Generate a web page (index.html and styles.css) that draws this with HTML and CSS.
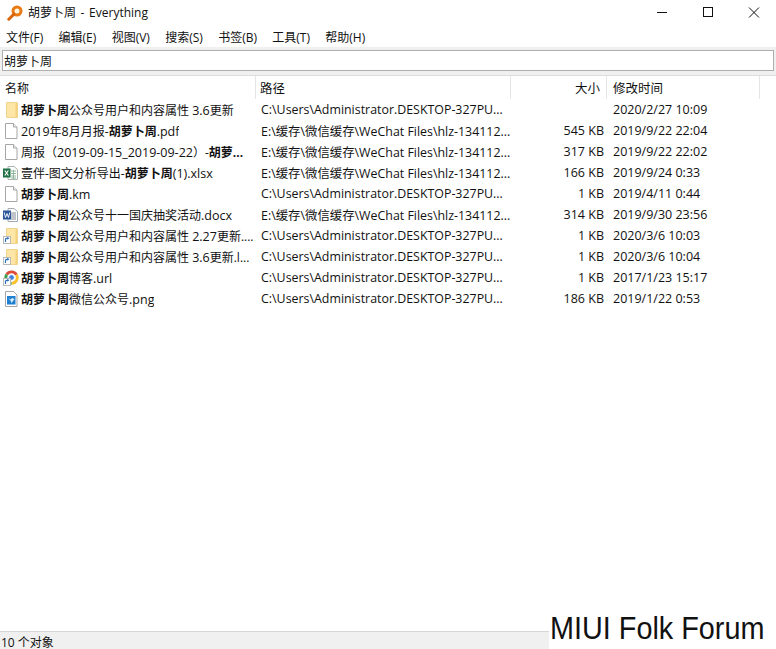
FILE: index.html
```html
<!DOCTYPE html>
<html lang="zh">
<head>
<meta charset="utf-8">
<title>胡萝卜周 - Everything</title>
<link rel="stylesheet" href="styles.css">
</head>
<body>
<svg class="defs" width="0" height="0" aria-hidden="true">
  <defs>
    <symbol id="i-folder" viewBox="0 0 16 16">
      <path d="M3.500 .5h10.500a.5.5 0 0 1 .5.5v14.500h-10.500a.5.5 0 0 1-.5-.5z" fill="#fde6a6" stroke="#eacb7c" stroke-width=".8"/>
      <path d="M12.500 1.500h1.500v13.500h-1.500z" fill="#f6d27a"/>
    </symbol>
    <symbol id="i-file" viewBox="0 0 16 16">
      <path d="M2.500 .5h8l3.500 3.500v11.500h-11.500z" fill="#fff" stroke="#a6a6a6"/>
      <path d="M10.500 .5v3.500h3.500" fill="#f1f1f1" stroke="#a6a6a6"/>
    </symbol>
    <symbol id="i-xlsx" viewBox="0 0 16 16">
      <path d="M5 1.500h6l3.500 3v10h-9.500z" fill="#fff" stroke="#a9b5ac"/>
      <path d="M8 6h5M8 8.500h5M8 11h5M8 13h5M10.500 5v9" stroke="#8fb59e" fill="none"/>
      <rect x="0" y="3.500" width="7.500" height="9" fill="#1e7145"/>
      <path d="M1.800 5.500l3.600 5M5.400 5.500l-3.600 5" stroke="#fff" stroke-width="1.200"/>
    </symbol>
    <symbol id="i-docx" viewBox="0 0 16 16">
      <path d="M5 1.500h6l3.500 3v10h-9.500z" fill="#fff" stroke="#a5abb3"/>
      <path d="M8 6h5M8 8h5M8 10h5M8 12h5" stroke="#7f8a96" fill="none"/>
      <rect x="0" y="3.500" width="8" height="9" fill="#2a5699"/>
      <path d="M1.200 5.500l1.300 5 1.500-4 1.500 4 1.300-5" stroke="#fff" stroke-width=".9" fill="none"/>
    </symbol>
    <symbol id="i-link" viewBox="0 0 16 16">
      <path d="M3.500 .5h10.500a.5.5 0 0 1 .5.5v14.500h-11z" fill="#fde6a6" stroke="#eacb7c" stroke-width=".8"/>
      <path d="M12.500 1.500h1.500v13.500h-1.500z" fill="#f6d27a"/>
      <rect x=".5" y="8.500" width="7" height="7" fill="#fff" stroke="#b9b9b9"/>
      <path d="M2.500 14v-2.500a1.200 1.200 0 0 1 1.200-1.200h1.300" stroke="#2a6ebb" stroke-width="1.200" fill="none"/>
      <path d="M4.300 8.800l2.200 1.500-2.200 1.500z" fill="#2a6ebb"/>
    </symbol>
    <symbol id="i-url" viewBox="0 0 16 16">
      <path d="M3.700 4.500a5.700 5.700 0 0 1 9.800 .3" stroke="#dd4b39" stroke-width="2.800" fill="none"/>
      <path d="M13.500 4.800a5.700 5.700 0 0 1-4.900 8.500" stroke="#fbc02d" stroke-width="2.800" fill="none"/>
      <path d="M8.600 13.300a5.700 5.700 0 0 1-4.900-8.800" stroke="#3f9f4c" stroke-width="2.800" fill="none"/>
      <circle cx="8.500" cy="7.500" r="2.800" fill="#3f7fe0" stroke="#fff" stroke-width=".8"/>
      <rect x=".5" y="8.500" width="7" height="7" fill="#fff" stroke="#b9b9b9"/>
      <path d="M2.500 14v-2.500a1.200 1.200 0 0 1 1.200-1.200h1.300" stroke="#2a6ebb" stroke-width="1.200" fill="none"/>
      <path d="M4.300 8.800l2.200 1.500-2.200 1.500z" fill="#2a6ebb"/>
    </symbol>
    <symbol id="i-png" viewBox="0 0 16 16">
      <path d="M2.500 .5h8l3.500 3.500v11.500h-11.500z" fill="#fff" stroke="#a6a6a6"/>
      <rect x="4" y="5" width="8.500" height="8.500" fill="#1f7fd0"/>
      <path d="M5 7l2.500 1.500 1.500-1.500 2.500 1-3 4-1-2.500z" fill="#d8ecfa"/>
    </symbol>
  </defs>
</svg>
<div class="app">
  <header class="titlebar">
    <svg class="app-icon" viewBox="0 0 16 16" width="16" height="16" aria-hidden="true">
      <circle cx="10" cy="6" r="4" fill="#fff6e0" stroke="#ea7a12" stroke-width="3"/>
      <path d="M6.800 9.200l-5 5" stroke="#d9660a" stroke-width="3" stroke-linecap="round"/>
    </svg>
    <span class="title-text">胡萝卜周 - Everything</span>
    <div class="win-buttons">
      <svg class="win-btn" viewBox="0 0 46 20" aria-hidden="true"><path d="M17 12.500h10" stroke="#111" fill="none"/></svg>
      <svg class="win-btn" viewBox="0 0 46 20" aria-hidden="true"><rect x="17.500" y="7.500" width="9" height="9" stroke="#111" fill="none"/></svg>
      <svg class="win-btn" viewBox="0 0 46 20" aria-hidden="true"><path d="M17 7.500l10 10M27 7.500l-10 10" stroke="#111" fill="none"/></svg>
    </div>
  </header>
  <nav class="menubar">
    <span>文件(F)</span><span>编辑(E)</span><span>视图(V)</span><span>搜索(S)</span><span>书签(B)</span><span>工具(T)</span><span>帮助(H)</span>
  </nav>
  <div class="searchwrap"><div class="searchbox">胡萝卜周</div></div>
  <div class="row head">
    <div class="c-name h">名称</div>
    <div class="c-path h">路径</div>
    <div class="c-size h">大小</div>
    <div class="c-date h">修改时间</div>
  </div>
  <main class="list">
    <div class="row"><div class="c-name"><svg class="ico"><use href="#i-folder"/></svg><span class="nm"><b>胡萝卜周</b>公众号用户和内容属性 <i>3.6</i>更新</span></div><div class="c-path">C:\Users\Administrator.DESKTOP-327PU...</div><div class="c-size"></div><div class="c-date">2020/2/27 10:09</div></div>
    <div class="row"><div class="c-name"><svg class="ico"><use href="#i-file"/></svg><span class="nm"><i>2019</i>年<i>8</i>月月报-<b>胡萝卜周</b><i>.pdf</i></span></div><div class="c-path">E:\缓存\微信缓存\WeChat Files\hlz-134112...</div><div class="c-size">545 KB</div><div class="c-date">2019/9/22 22:04</div></div>
    <div class="row"><div class="c-name"><svg class="ico"><use href="#i-file"/></svg><span class="nm">周报（<i>2019-09-15_2019-09-22</i>）-<b>胡萝...</b></span></div><div class="c-path">E:\缓存\微信缓存\WeChat Files\hlz-134112...</div><div class="c-size">317 KB</div><div class="c-date">2019/9/22 22:02</div></div>
    <div class="row"><div class="c-name"><svg class="ico"><use href="#i-xlsx"/></svg><span class="nm">壹伴-图文分析导出-<b>胡萝卜周</b><i>(1).xlsx</i></span></div><div class="c-path">E:\缓存\微信缓存\WeChat Files\hlz-134112...</div><div class="c-size">166 KB</div><div class="c-date">2019/9/24 0:33</div></div>
    <div class="row"><div class="c-name"><svg class="ico"><use href="#i-file"/></svg><span class="nm"><b>胡萝卜周</b><i>.km</i></span></div><div class="c-path">C:\Users\Administrator.DESKTOP-327PU...</div><div class="c-size">1 KB</div><div class="c-date">2019/4/11 0:44</div></div>
    <div class="row"><div class="c-name"><svg class="ico"><use href="#i-docx"/></svg><span class="nm"><b>胡萝卜周</b>公众号十一国庆抽奖活动<i>.docx</i></span></div><div class="c-path">E:\缓存\微信缓存\WeChat Files\hlz-134112...</div><div class="c-size">314 KB</div><div class="c-date">2019/9/30 23:56</div></div>
    <div class="row"><div class="c-name"><svg class="ico"><use href="#i-link"/></svg><span class="nm"><b>胡萝卜周</b>公众号用户和内容属性 <i>2.27</i>更新....</span></div><div class="c-path">C:\Users\Administrator.DESKTOP-327PU...</div><div class="c-size">1 KB</div><div class="c-date">2020/3/6 10:03</div></div>
    <div class="row"><div class="c-name"><svg class="ico"><use href="#i-link"/></svg><span class="nm"><b>胡萝卜周</b>公众号用户和内容属性 <i>3.6</i>更新.l...</span></div><div class="c-path">C:\Users\Administrator.DESKTOP-327PU...</div><div class="c-size">1 KB</div><div class="c-date">2020/3/6 10:04</div></div>
    <div class="row"><div class="c-name"><svg class="ico"><use href="#i-url"/></svg><span class="nm"><b>胡萝卜周</b>博客<i>.url</i></span></div><div class="c-path">C:\Users\Administrator.DESKTOP-327PU...</div><div class="c-size">1 KB</div><div class="c-date">2017/1/23 15:17</div></div>
    <div class="row"><div class="c-name"><svg class="ico"><use href="#i-png"/></svg><span class="nm"><b>胡萝卜周</b>微信公众号<i>.png</i></span></div><div class="c-path">C:\Users\Administrator.DESKTOP-327PU...</div><div class="c-size">186 KB</div><div class="c-date">2019/1/22 0:53</div></div>
  </main>
  <footer class="statusbar">10 个对象</footer>
  <div class="watermark"><span class="wm-text">MIUI Folk Forum</span></div>
</div>
</body>
</html>
```
FILE: styles.css
```css
* { box-sizing: border-box; }
html, body { margin: 0; padding: 0; }
body {
  background: #fff;
  color: #111;
  font-family: "Open Sans", "Noto Sans CJK SC", sans-serif;
  font-size: 12px;
  overflow: hidden;
}
.defs { display: block; height: 0; }
.app {
  position: relative;
  width: 776px;
  height: 649px;
  display: flex;
  flex-direction: column;
  overflow: hidden;
}
.titlebar {
  flex: 0 0 26px;
  display: flex;
  align-items: center;
  padding-left: 7px;
}
.app-icon { flex: none; margin-right: 5px; }
.title-text { flex: 1; word-spacing: 1.500px; position: relative; top: -1px; }
.win-buttons { display: flex; align-self: flex-start; margin-right: -2px; }
.win-btn { width: 46px; height: 20px; display: block; }
.menubar {
  flex: 0 0 21px;
  display: flex;
  align-items: center;
  gap: 15.300px;
  padding-left: 6px;
}
.searchwrap {
  flex: 0 0 28px;
  background: #f0f0f0;
  padding: 3px 2px 4px 2px;
}
.searchbox {
  height: 21px;
  background: #fff;
  border: 1px solid #aeaeae;
  padding-left: 1px;
  line-height: 21px;
}
.row { display: flex; height: 21px; align-items: center; white-space: nowrap; }
.head {
  flex: 0 0 24px;
  height: 24px;
  border-top: 1px solid #dcdcdc;
  padding-right: 16px;
}
.h { border-right: 1px solid #e5e5e5; height: 100%; display: flex; align-items: center; font-size: 12px; }
.h.c-name { padding-left: 5px; }
.h.c-path { padding-left: 4px; }
.h.c-date { padding-left: 6px; }
.h.c-size { justify-content: flex-end; padding-right: 6px; }
.c-name { flex: 0 0 256px; display: flex; align-items: center; padding-left: 3px; overflow: hidden; }
.c-path { flex: 0 0 255px; padding-left: 5px; overflow: hidden; font-size: 12.400px; }
.c-size { flex: 0 0 96px; text-align: right; padding-right: 3px; font-size: 12.500px; }
.c-date { flex: 0 0 153px; padding-left: 6px; font-size: 12.500px; }
.ico { width: 16px; height: 16px; flex: none; margin-right: 2px; }
.nm { overflow: hidden; }
.nm b { font-weight: 700; }
.nm i { font-style: normal; font-size: 12.500px; }
.list { flex: 1; min-height: 0; }
.statusbar {
  flex: 0 0 18px;
  min-height: 0;
  background: #f0f0f0;
  border-top: 1px solid #d6d6d6;
  padding: 4px 0 0 1px;
  line-height: 13px;
}
.watermark {
  position: absolute;
  left: 549px;
  bottom: 0;
  width: 227px;
  height: 37px;
  background: #fff;
  color: #111;
  font-family: "Liberation Sans", sans-serif;
  font-size: 32px;
  line-height: 33px;
  padding-left: 1px;
  white-space: nowrap;
}
.wm-text { display: inline-block; transform: scaleX(.9); transform-origin: left center; }
```
